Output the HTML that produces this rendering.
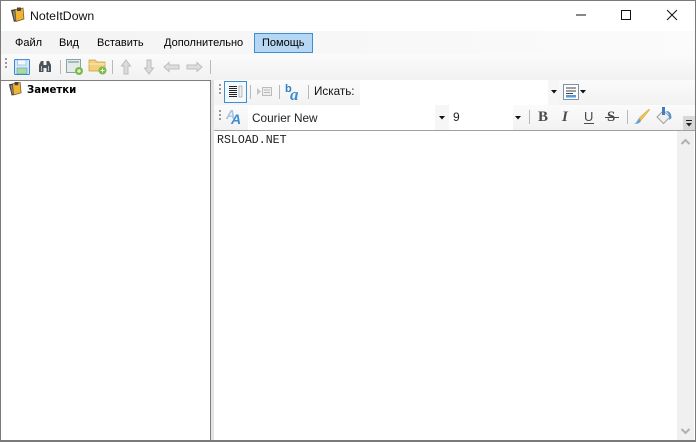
<!DOCTYPE html>
<html><head><meta charset="utf-8">
<style>
*{box-sizing:border-box}
html,body{margin:0;padding:0;width:696px;height:442px;overflow:hidden;background:#fff}
body{font-family:"Liberation Sans","DejaVu Sans",sans-serif;font-size:11px;color:#000;position:relative}
.a{position:absolute}
.t{position:absolute;white-space:nowrap;line-height:14px}
.sep{position:absolute;width:1px;background:#b8b8b8}
.grip{position:absolute;width:2px;height:11px;background:repeating-linear-gradient(#9a9a9a 0 2px,transparent 2px 4px)}
svg{position:absolute;overflow:visible}
</style></head><body>
<div class="a" style="left:0;top:0;width:696px;height:442px;background:#f0f0f0"></div>
<div class="a" style="left:0;top:1px;width:696px;height:30px;background:#fff"></div>
<div class="a" style="left:0;top:31px;width:696px;height:23px;background:linear-gradient(90deg,#f3f3f3,#f8f8f8 60%,#fbfbfb)"></div>
<div class="a" style="left:0;top:54px;width:696px;height:26px;background:linear-gradient(#fbfbfb,#f1f1f1)"></div>

<svg style="left:10px;top:7px" width="16" height="16" viewBox="0 0 16 16"><path d="M1 3l5-1 2 11-4 2z" fill="#3a3632"/><path d="M2.500 4l2-.4 1.500 9-1.500.8z" fill="#8c8678"/><path d="M5 2.500l8-1.500 1 11-8 2.500z" fill="#f0b432" stroke="#6a5020" stroke-width=".7"/><path d="M7 .5h4v3.500H7z" fill="#4d4338"/></svg>
<div class="t" style="left:30px;top:9px;font-size:12.300px;color:#111">NoteItDown</div>
<svg style="left:576px;top:14px" width="14" height="3"><path d="M0 1h10" stroke="#111" stroke-width="1"/></svg>
<div class="a" style="left:621px;top:10px;width:10px;height:10px;border:1px solid #111"></div>
<svg style="left:667px;top:10px" width="10" height="10"><path d="M0 0L10 10M10 0L0 10" stroke="#111" stroke-width="1"/></svg>

<div class="t" style="left:15px;top:36px">Файл</div>
<div class="t" style="left:59px;top:36px">Вид</div>
<div class="t" style="left:97px;top:36px">Вставить</div>
<div class="t" style="left:164px;top:36px">Дополнительно</div>
<div class="a" style="left:254px;top:33px;width:59px;height:20px;background:#b5d7f3;border:1px solid #3f8fd0"></div>
<div class="t" style="left:262px;top:36px">Помощь</div>

<div class="grip" style="left:5px;top:58px"></div>
<svg style="left:14px;top:59px" width="16" height="16" viewBox="0 0 16 16"><rect x=".5" y=".5" width="15" height="15" rx="1" fill="#d6e8f8" stroke="#3d86d0"/><rect x="3.500" y="1" width="8.500" height="5" fill="#f4f8fc" stroke="#7fb0e0" stroke-width=".6"/><rect x="3" y="9" width="10" height="6" fill="#a9dc9c" stroke="#3d86d0" stroke-width=".5"/></svg>
<svg style="left:38px;top:60px" width="14" height="13" viewBox="0 0 14 13"><path d="M1 5l2-4h2.500v4h3V1H11l2 4v7H8.500V8h-3v4H1z" fill="#4a545a"/><path d="M3.500 6v5M10.500 6v5" stroke="#b8c0c4"/></svg>
<div class="sep" style="left:60px;top:60px;height:14px"></div>
<svg style="left:66px;top:59px" width="18" height="17" viewBox="0 0 18 17"><rect x=".5" y=".5" width="14" height="13" fill="#e4eae8" stroke="#8aa4a4"/><rect x="2" y="2" width="11" height="2" fill="#a0bcbc"/><circle cx="13" cy="12" r="4" fill="#7cbb4a"/><path d="M11 12h4M13 10v4" stroke="#fff"/></svg>
<svg style="left:89px;top:58px" width="18" height="17" viewBox="0 0 18 17"><path d="M0 2h6l2 2h8v9H0z" fill="#f3cf7c" stroke="#c89a40" stroke-width=".7"/><path d="M0 6h16" stroke="#fbeec0"/><circle cx="13.500" cy="12.500" r="4" fill="#7cbb4a"/><path d="M11.500 12.500h4M13.500 10.500v4" stroke="#fff"/></svg>
<div class="sep" style="left:112px;top:60px;height:14px"></div>
<svg style="left:120px;top:59px" width="12" height="16" viewBox="0 0 12 16"><path d="M6 1l4.500 6H8v8H4V7H1.500z" fill="#dcdcdc" stroke="#bcbcbc"/></svg>
<svg style="left:143px;top:59px" width="12" height="16" viewBox="0 0 12 16"><path d="M6 15l4.500-6H8V1H4v8H1.500z" fill="#dcdcdc" stroke="#bcbcbc"/></svg>
<svg style="left:163px;top:61px" width="17" height="12" viewBox="0 0 17 12"><path d="M1 6l5-4.500V4h10v4H6v2.500z" fill="#dedede" stroke="#bebebe"/></svg>
<svg style="left:186px;top:61px" width="17" height="12" viewBox="0 0 17 12"><path d="M16 6l-5-4.500V4H1v4h10v2.500z" fill="#dedede" stroke="#bebebe"/></svg>
<div class="sep" style="left:210px;top:60px;height:14px"></div>

<div class="a" style="left:211px;top:80px;width:3px;height:362px;background:#e4e4e4"></div>
<div class="a" style="left:0;top:80px;width:211px;height:362px;background:#fff;border:1px solid #7f7f7f"></div>
<svg style="left:8px;top:81px" width="15" height="16" viewBox="0 0 16 16"><path d="M1 3l5-1 2 11-4 2z" fill="#3a3632"/><path d="M2.500 4l2-.4 1.500 9-1.500.8z" fill="#8c8678"/><path d="M5 2.500l8-1.500 1 11-8 2.500z" fill="#f0b432" stroke="#6a5020" stroke-width=".7"/><path d="M7 .5h4v3.500H7z" fill="#4d4338"/></svg>
<div class="t" style="left:27px;top:84px;font-family:'DejaVu Sans',sans-serif;font-weight:bold;font-size:10.200px">Заметки</div>

<div class="a" style="left:214px;top:80px;width:482px;height:25px;background:linear-gradient(#fbfbfb,#f2f2f2)"></div>
<div class="a" style="left:214px;top:105px;width:482px;height:25px;background:linear-gradient(#fbfbfb,#f2f2f2)"></div>

<div class="grip" style="left:219px;top:84px"></div>
<div class="a" style="left:224px;top:81px;width:23px;height:22px;background:#f4f9fd;border:1px solid #3f8fd0"></div>
<svg style="left:229px;top:86px" width="14" height="12"><path d="M0 .5h8M0 2.500h8M0 4.500h8M0 6.500h8M0 8.500h8M0 10.500h8" stroke="#222"/><rect x="10" y="0" width="3" height="11" fill="#eee" stroke="#999" stroke-width=".6"/></svg>
<div class="sep" style="left:250px;top:85px;height:14px"></div>
<svg style="left:257px;top:86px" width="15" height="11"><path d="M0 2l4 3.500L0 9z" fill="#c4c4c4"/><rect x="5.500" y="1.500" width="9" height="8" fill="#eee" stroke="#bbb"/><path d="M7 4h6M7 6.500h6" stroke="#bbb"/></svg>
<div class="sep" style="left:279px;top:85px;height:14px"></div>
<svg style="left:285px;top:83px" width="17" height="18" viewBox="0 0 17 18"><text x="0" y="9" font-family="Liberation Sans,sans-serif" font-weight="bold" font-size="11" fill="#2f7fc4">b</text><text x="5" y="17" font-family="Liberation Serif,serif" font-style="italic" font-weight="bold" font-size="17" fill="#3f8fd0">a</text></svg>
<div class="sep" style="left:308px;top:85px;height:14px"></div>
<div class="t" style="left:314px;top:85px;color:#111;font-size:11.700px">Искать:</div>
<div class="a" style="left:360px;top:80px;width:188px;height:25px;background:#fff"></div>
<div class="a" style="left:548px;top:80px;width:11px;height:25px;background:#f6f6f6"></div>
<svg style="left:551px;top:90px" width="6" height="4"><path d="M0 0h6L3 3.500z" fill="#111"/></svg>
<svg style="left:563px;top:84px" width="16" height="16"><rect x=".5" y=".5" width="15" height="15" fill="#fdfdfd" stroke="#7f93a8"/><path d="M3 4h10M3 7h10M3 9.500h7" stroke="#444"/><rect x="3" y="11" width="10" height="2.500" fill="#4f9bde"/></svg>
<svg style="left:580px;top:90px" width="6" height="4"><path d="M0 0h6L3 3.500z" fill="#111"/></svg>

<div class="grip" style="left:219px;top:110px"></div>
<svg style="left:226px;top:108px" width="18" height="17" viewBox="0 0 18 17"><text x="0" y="11" font-family="Liberation Sans,sans-serif" font-style="italic" font-weight="bold" font-size="13" fill="#a8c4e0">A</text><text x="5" y="16" font-family="Liberation Sans,sans-serif" font-style="italic" font-weight="bold" font-size="14" fill="#3f8fd0">A</text></svg>
<div class="a" style="left:248px;top:105px;width:187px;height:25px;background:#fff"></div>
<div class="t" style="left:252px;top:111px;color:#222;font-size:11.800px">Courier New</div>
<div class="a" style="left:435px;top:105px;width:14px;height:25px;background:#f6f6f6"></div>
<svg style="left:439px;top:116px" width="6" height="4"><path d="M0 0h6L3 3.500z" fill="#111"/></svg>
<div class="a" style="left:449px;top:105px;width:64px;height:25px;background:#fff"></div>
<div class="t" style="left:453px;top:110px;color:#222;font-size:12px">9</div>
<svg style="left:515px;top:116px" width="6" height="4"><path d="M0 0h6L3 3.500z" fill="#111"/></svg>
<div class="sep" style="left:529px;top:110px;height:14px"></div>
<div class="t" style="left:538px;top:109px;font:bold 15px/16px 'Liberation Serif',serif;color:#4a4a4a">B</div>
<div class="t" style="left:562px;top:109px;font:italic bold 15px/16px 'Liberation Serif',serif;color:#4a4a4a">I</div>
<div class="t" style="left:584px;top:109px;font:13px/15px 'Liberation Sans',sans-serif;color:#4a4a4a">U</div>
<div class="a" style="left:584px;top:123px;width:10px;height:1px;background:#4a4a4a"></div>
<div class="t" style="left:607px;top:109px;font:bold 15px/16px 'Liberation Serif',serif;color:#4a4a4a">S</div>
<div class="a" style="left:605px;top:117px;width:14px;height:1px;background:#4a4a4a"></div>
<div class="sep" style="left:627px;top:110px;height:14px"></div>
<svg style="left:633px;top:109px" width="17" height="16" viewBox="0 0 17 16"><path d="M16 0L6 9l2 2.500L16.500 1z" fill="#eec34f" stroke="#c99a30" stroke-width=".5"/><path d="M1 14.500c3 0 3-4 5-5l2 2.500c-1 2-4 3.500-7 2.500z" fill="#6f9fd0"/></svg>
<svg style="left:656px;top:106px" width="17" height="19" viewBox="0 0 17 19"><path d="M1 11l6.500-6.500L14 11l-6.500 6.500z" fill="#efefef" stroke="#a0a0a0"/><path d="M6 1h3v8H6z" fill="#3f7fc0"/><path d="M10 5c4 0 5.500 3 5.500 7l-2 2-1-6z" fill="#5a94d0"/></svg>
<div class="a" style="left:683px;top:116px;width:12px;height:14px;background:#d8d8d8"></div>
<svg style="left:685px;top:120px" width="8" height="8"><path d="M1 .5h6" stroke="#222"/><path d="M1 3h6L4 6.500z" fill="#222"/></svg>

<div class="a" style="left:214px;top:130px;width:481px;height:311px;background:#fff;border-top:1px solid #a0a0a0"></div>
<div class="t" style="left:217px;top:134px;font:11.600px/14px 'Liberation Mono',monospace;color:#222">RSLOAD.NET</div>
<div class="a" style="left:677px;top:131px;width:17px;height:309px;background:#f0f0f0"></div>
<svg style="left:681px;top:139px" width="9" height="6"><path d="M.5 5L4.500 1l4 4" fill="none" stroke="#b0b0b0" stroke-width="2"/></svg>
<svg style="left:681px;top:428px" width="9" height="6"><path d="M.5 1L4.500 5l4-4" fill="none" stroke="#b0b0b0" stroke-width="2"/></svg>

<div class="a" style="left:0;top:0;width:696px;height:442px;border:1px solid #7a7a7a;border-bottom-width:2px"></div>
</body></html>
